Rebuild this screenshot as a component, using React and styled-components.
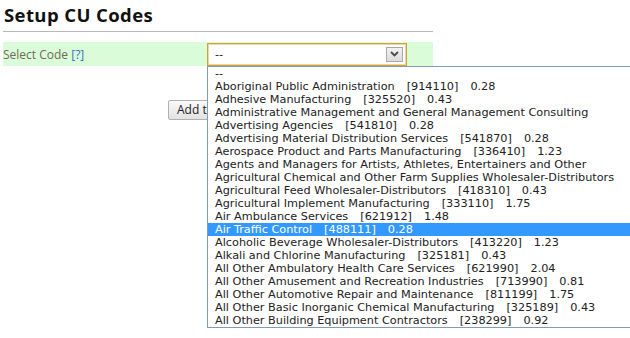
import React from "react";
import styled, { createGlobalStyle } from "styled-components";

const codes = [
  { name: "--" },
  { name: "Aboriginal Public Administration", code: "914110", rate: "0.28" },
  { name: "Adhesive Manufacturing", code: "325520", rate: "0.43" },
  { name: "Administrative Management and General Management Consulting" },
  { name: "Advertising Agencies", code: "541810", rate: "0.28" },
  { name: "Advertising Material Distribution Services", code: "541870", rate: "0.28" },
  { name: "Aerospace Product and Parts Manufacturing", code: "336410", rate: "1.23" },
  { name: "Agents and Managers for Artists, Athletes, Entertainers and Other" },
  { name: "Agricultural Chemical and Other Farm Supplies Wholesaler-Distributors" },
  { name: "Agricultural Feed Wholesaler-Distributors", code: "418310", rate: "0.43" },
  { name: "Agricultural Implement Manufacturing", code: "333110", rate: "1.75" },
  { name: "Air Ambulance Services", code: "621912", rate: "1.48" },
  { name: "Air Traffic Control", code: "488111", rate: "0.28" },
  { name: "Alcoholic Beverage Wholesaler-Distributors", code: "413220", rate: "1.23" },
  { name: "Alkali and Chlorine Manufacturing", code: "325181", rate: "0.43" },
  { name: "All Other Ambulatory Health Care Services", code: "621990", rate: "2.04" },
  { name: "All Other Amusement and Recreation Industries", code: "713990", rate: "0.81" },
  { name: "All Other Automotive Repair and Maintenance", code: "811199", rate: "1.75" },
  { name: "All Other Basic Inorganic Chemical Manufacturing", code: "325189", rate: "0.43" },
  { name: "All Other Building Equipment Contractors", code: "238299", rate: "0.92" },
];

const SELECTED = "488111";

const App = () => {
  return (
    <>
      <GlobalStyle />
      <Screen>
        <Page>
          <Title>Setup CU Codes</Title>
          <Rule />
          <FormRow>
            <FieldLabel>
              Select Code <Help>[?]</Help>
            </FieldLabel>
            <SelectWrap>
              <SelectBox>
                <SelectValue>--</SelectValue>
                <ArrowButton>
                  <svg width="9" height="6" viewBox="0 0 9 6">
                    <polyline points="1,1 4.5,4.5 8,1" fill="none" stroke="#4a4a4a" strokeWidth="1.8" />
                  </svg>
                </ArrowButton>
              </SelectBox>
              <OptionList>
                {codes.map((item, index) => (
                  <Option key={index} $active={item.code === SELECTED}>
                    {item.name}
                    {item.code && <Extra>[{item.code}]</Extra>}
                    {item.rate && <Extra>{item.rate}</Extra>}
                  </Option>
                ))}
              </OptionList>
            </SelectWrap>
          </FormRow>
          <ButtonRow>
            <Button>Add to List</Button>
          </ButtonRow>
        </Page>
      </Screen>
    </>
  );
};

export default App;

const GlobalStyle = createGlobalStyle`
  html, body {
    margin: 0;
    padding: 0;
    background: #fff;
  }
  body {
    font-family: "Open Sans", "Noto Sans", sans-serif;
  }
`;

const Screen = styled.div`
  width: 100vw;
  height: 100vh;
  overflow: hidden;
`;

const Page = styled.div`
  width: 430px;
  margin-left: 3px;
  padding-top: 2px;
`;

const Title = styled.h1`
  margin: 0;
  padding-left: 1px;
  font-family: "Open Sans", sans-serif;
  font-weight: 700;
  font-size: 18.5px;
  letter-spacing: 0.4px;
  line-height: 26px;
  color: #111;
`;

const Rule = styled.div`
  height: 1px;
  margin-top: 3px;
  background: #b8b8b8;
`;

const FormRow = styled.div`
  margin-top: 10px;
  height: 24px;
  display: grid;
  grid-template-columns: 204px 200px;
  align-items: center;
  background: #dbfcd9;
`;

const FieldLabel = styled.div`
  font-family: "Open Sans", sans-serif;
  font-size: 12px;
  color: #6d6b57;
`;

const Help = styled.span`
  color: #2f74b8;
  font-size: 12px;
`;

const SelectWrap = styled.div`
  position: relative;
  height: 23px;
`;

const SelectBox = styled.div`
  box-sizing: border-box;
  height: 23px;
  display: flex;
  align-items: center;
  justify-content: space-between;
  padding: 0 3px 0 7px;
  background: #fff;
  border: 1px solid #d2a13c;
  box-shadow: inset 0 0 0 1px #ecd79f;
`;

const SelectValue = styled.span`
  font-family: "DejaVu Sans", Verdana, sans-serif;
  font-size: 11.25px;
  color: #222;
`;

const ArrowButton = styled.div`
  box-sizing: border-box;
  width: 17px;
  height: 15px;
  display: flex;
  align-items: center;
  justify-content: center;
  border: 1px solid #a9a9a9;
  background: linear-gradient(#f2f2f2, #dcdcdc);
`;

const OptionList = styled.div`
  position: absolute;
  top: 23px;
  left: 0;
  width: 440px;
  border: 1px solid #7f9db9;
  background: #fff;
  z-index: 2;
`;

const Option = styled.div`
  height: 13px;
  line-height: 13px;
  padding-left: 7px;
  white-space: nowrap;
  font-family: "DejaVu Sans", Verdana, sans-serif;
  font-size: 11.25px;
  color: ${(p) => (p.$active ? "#fff" : "#222")};
  background: ${(p) => (p.$active ? "#3399ff" : "transparent")};
`;

const Extra = styled.span`
  margin-left: 12px;
`;

const ButtonRow = styled.div`
  margin-top: 31px;
  padding-left: 165px;
`;

const Button = styled.button`
  height: 20px;
  padding: 0 8px;
  font-family: "Open Sans", sans-serif;
  font-size: 12px;
  color: #222;
  border: 1px solid #b0b0b0;
  border-radius: 2px;
  background: linear-gradient(#fafafa, #e2e2e2);
`;
